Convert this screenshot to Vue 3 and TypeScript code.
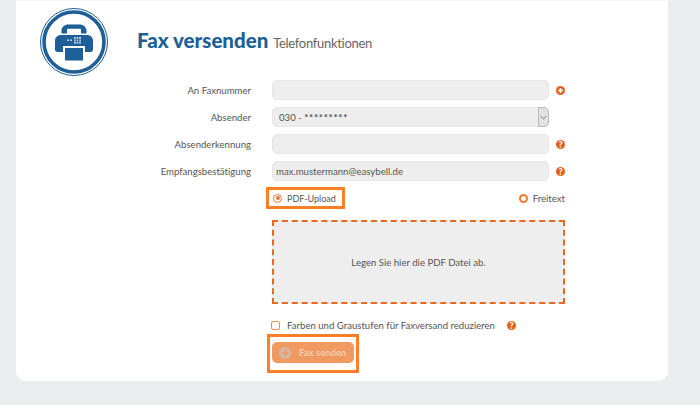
<script setup lang="ts">
const rows = [
  { label: 'An Faxnummer', value: '', secret: '', icon: 'plus' },
  { label: 'Absender', value: '030 - ', secret: '*********', icon: 'select' },
  { label: 'Absenderkennung', value: '', secret: '', icon: 'help' },
  { label: 'Empfangsbestätigung', value: 'max.mustermann@easybell.de', secret: '', icon: 'help' },
]
</script>

<template>
  <div class="page">
    <main class="card">
      <header class="head">
        <svg class="logo" viewBox="0 0 68 68" width="68" height="68">
          <circle cx="34" cy="34" r="33.500" fill="none" stroke="#1d5f96" stroke-width="1" />
          <circle cx="34" cy="34" r="30" fill="none" stroke="#1d5f96" stroke-width="3.600" />
          <path d="M21.500 23c0-4 3-6.500 7-6.500h11c4 0 7 2.500 7 6.500v2.500h-5.500v-3.500c0-.8-.5-1.200-1.200-1.200H28.200c-.7 0-1.200.4-1.200 1.200v3.500h-5.500z" fill="#1d5f96" />
          <path d="M21 27h26c3.500 0 6 2.500 6 6v8.500c0 1.500-1 2.500-2.500 2.500H45v-6H23v6h-5.500c-1.500 0-2.500-1-2.500-2.500V33c0-3.500 2.500-6 6-6z" fill="#1d5f96" />
          <rect x="24.500" y="39.500" width="19" height="13.500" fill="#1d5f96" stroke="#fff" stroke-width="1" />
          <path d="M34 29h7v6.500h-7z" fill="#fff" opacity=".75" />
          <path d="M36.300 29v6.500M38.700 29v6.500M34 31.200h7M34 33.300h7" stroke="#1d5f96" stroke-width=".8" />
          <rect x="27" y="31.500" width="2" height="1.400" fill="#fff" opacity=".8" />
          <rect x="30" y="31.500" width="2" height="1.400" fill="#fff" opacity=".8" />
        </svg>
        <h1 class="title">Fax versenden <small>Telefonfunktionen</small></h1>
      </header>

      <form class="form">
        <div v-for="row in rows" :key="row.label" class="row">
          <label class="label">{{ row.label }}</label>
          <div class="input" :class="{ mailbox: row.label.startsWith('Emp'), selectbox: row.icon === 'select' }">
            <span class="val">{{ row.value }}<b v-if="row.secret">{{ row.secret }}</b></span>
            <span v-if="row.icon === 'select'" class="arrow">
              <svg viewBox="0 0 10 6" width="7" height="5"><path d="M1 1l4 4 4-4" fill="none" stroke="#666" stroke-width="1.300" /></svg>
            </span>
          </div>
          <span v-if="row.icon === 'plus'" class="badge plus">
            <svg viewBox="0 0 10 10" width="9" height="9"><path d="M5 2.300v5.400M2.300 5h5.400" stroke="#fff" stroke-width="1.800" /></svg>
          </span>
          <span v-else-if="row.icon === 'help'" class="badge">?</span>
        </div>

        <div class="choices">
          <span class="hl pdf">
            <span class="radio checked"></span>
            <span class="pdf-text">PDF-Upload</span>
          </span>
          <span class="free">
            <span class="radio"></span>
            <span>Freitext</span>
          </span>
        </div>

        <div class="drop">Legen Sie hier die PDF Datei ab.</div>

        <div class="reduce">
          <span class="check"></span>
          <span>Farben und Graustufen für Faxversand reduzieren</span>
          <span class="badge">?</span>
        </div>

        <div class="hl send">
          <button type="button" class="btn">
            <svg viewBox="0 0 12 12" width="12" height="12">
              <circle cx="6" cy="6" r="6" fill="#d7b6a0" />
              <path d="M2.800 6h5M5.800 3.300L8.500 6 5.800 8.700" fill="none" stroke="#f09a62" stroke-width="1.600" />
            </svg>
            <span>Fax senden</span>
          </button>
        </div>
      </form>
    </main>
  </div>
</template>

<style>
html, body { margin: 0; background: #ebeeef; }
</style>

<style scoped>
.page {
  width: 700px;
  height: 405px;
  box-sizing: border-box;
  padding: 0 32px 24px 16px;
  background: #ebeeef;
  font-family: Lato, "Noto Sans", sans-serif;
  font-size: 9.600px;
  font-variant-ligatures: none;
  color: #555;
  overflow: hidden;
}
.card {
  height: 381px;
  box-sizing: border-box;
  background: #fff;
  border-radius: 0 0 10px 10px;
  border-top: 1px solid #f4f5f5;
  padding-top: 7px;
}
.head {
  display: flex;
  align-items: center;
  gap: 29px;
  padding-left: 24px;
  height: 68px;
}
.logo { flex: none; }
.title {
  margin: 0 0 2px;
  font-size: 20.500px;
  line-height: 24px;
  font-weight: 900;
  color: #1d5f96;
  white-space: nowrap;
}
.title small {
  font-size: 13px;
  letter-spacing: -0.300px;
  font-weight: 400;
  color: #666;
}
.form {
  padding: 4px 0 0 0;
}
.row {
  display: flex;
  align-items: center;
  height: 20px;
  margin-bottom: 7px;
}
.label {
  width: 235px;
  text-align: right;
  flex: none;
  margin-right: 21px;
}
.input {
  width: 277px;
  height: 20px;
  box-sizing: border-box;
  display: flex;
  align-items: center;
  padding-left: 6px;
  background: #eee;
  border: 1px solid #e7e7e7;
  border-radius: 5px;
  color: #555;
  flex: none;
}
.val { white-space: pre; }
.val b { font-weight: 900; letter-spacing: 0.800px; }
.mailbox { padding-left: 3px; }
.selectbox { position: relative; }
.arrow {
  position: absolute;
  right: -1px;
  top: -1px;
  bottom: -1px;
  width: 11px;
  display: flex;
  align-items: center;
  justify-content: center;
  background: #e2e2e2;
  border: 1px solid #b9b9b9;
  border-radius: 0 5px 5px 0;
  box-sizing: border-box;
}
.badge {
  width: 9px;
  height: 9px;
  border-radius: 50%;
  background: #e4601a;
  color: #fff;
  font-size: 9px;
  font-weight: 900;
  line-height: 9px;
  text-align: center;
  margin-left: 7px;
  flex: none;
  display: inline-flex;
  align-items: center;
  justify-content: center;
}
.choices {
  display: flex;
  align-items: center;
  justify-content: space-between;
  width: 299px;
  height: 22px;
  margin: -1px 0 11px 250px;
  white-space: nowrap;
}
.hl {
  box-sizing: border-box;
  border: 3px solid #ff7f27;
}
.pdf {
  width: 79px;
  height: 22px;
  display: flex;
  align-items: center;
  gap: 5px;
  padding-left: 4px;
}
.pdf-text { font-size: 9px; }
.free {
  display: flex;
  align-items: center;
  gap: 5px;
}
.radio {
  width: 9px;
  height: 9px;
  box-sizing: border-box;
  border: 2px solid #f07a35;
  border-radius: 50%;
  flex: none;
}
.radio.checked {
  border-width: 1px;
  position: relative;
}
.radio.checked::after {
  content: "";
  position: absolute;
  inset: 1.500px;
  border-radius: 50%;
  background: #f07a35;
}
.drop {
  width: 293px;
  height: 84px;
  box-sizing: border-box;
  margin-left: 256px;
  background: #eee;
  border: 2px dashed #e8691f;
  display: flex;
  align-items: center;
  justify-content: center;
}
.reduce {
  display: flex;
  align-items: center;
  height: 12px;
  margin: 15px 0 0 255px;
  white-space: nowrap;
}
.check {
  width: 9px;
  height: 9px;
  box-sizing: border-box;
  border: 1px solid #f08a55;
  background: #fff;
  border-radius: 2px;
  margin-right: 7px;
  flex: none;
}
.reduce .badge { margin-left: 12px; }
.send {
  width: 92px;
  height: 39px;
  margin: 3px 0 0 251px;
  padding: 5px 0 0 2px;
}
.btn {
  width: 82px;
  height: 21px;
  padding: 0 0 0 7px;
  border: 0;
  border-radius: 5px;
  background: #f09a62;
  color: #f3c7a8;
  font: 900 9.500px Lato, "Noto Sans", sans-serif;
  white-space: nowrap;
  display: flex;
  align-items: center;
  gap: 8px;
}
</style>
